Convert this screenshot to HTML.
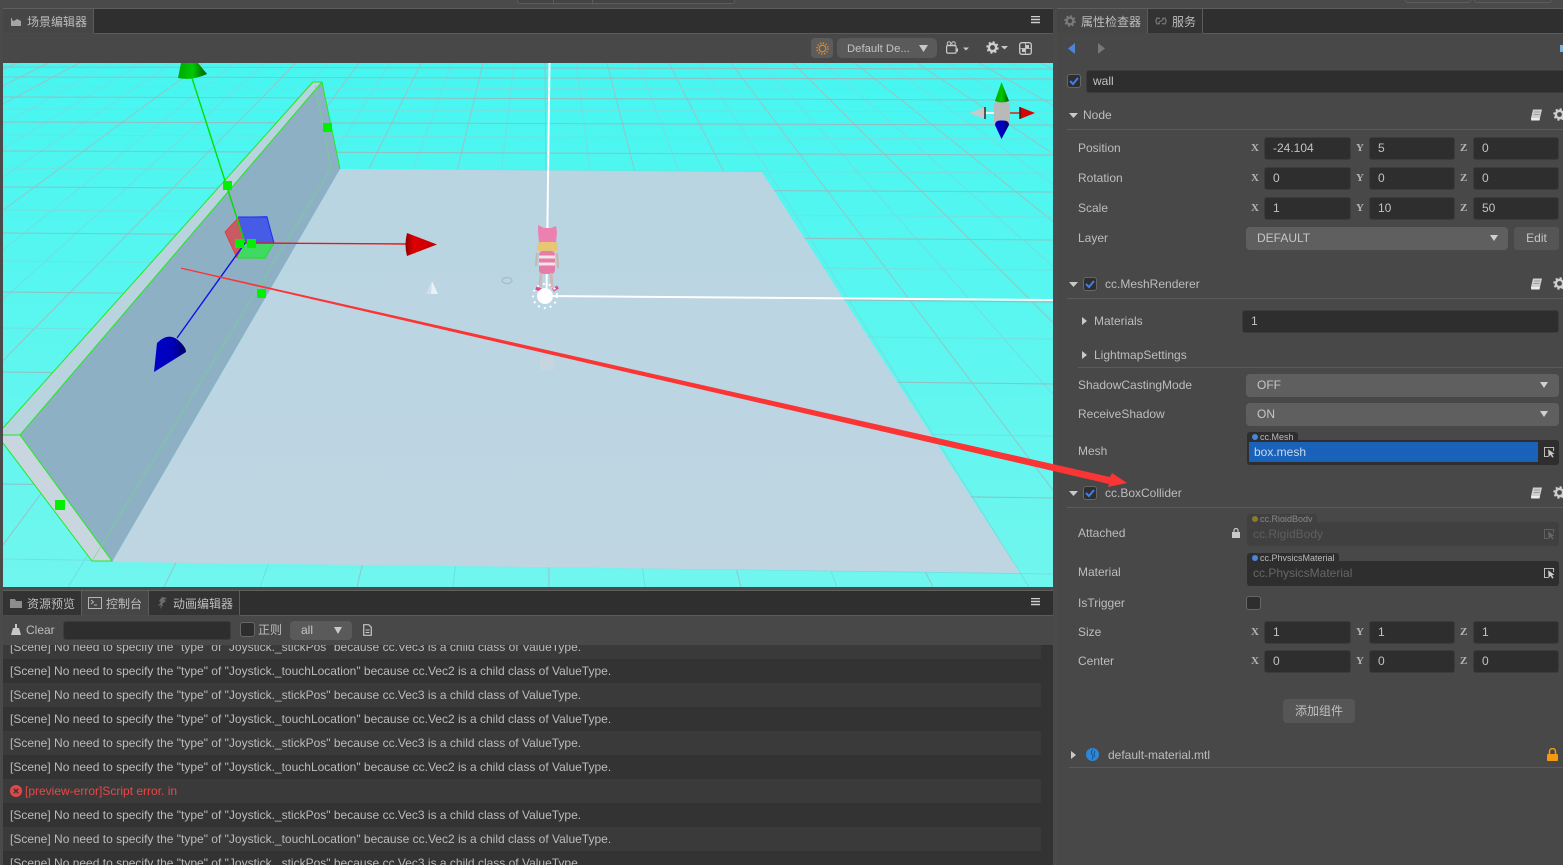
<!DOCTYPE html>
<html lang="zh"><head><meta charset="utf-8"><title>场景编辑器</title>
<style>
html,body{margin:0;padding:0;width:1563px;height:865px;overflow:hidden;background:#4a4a4a}
body{position:relative;font:12px "Liberation Sans","Noto Sans CJK SC",sans-serif;color:#bdbdbd}
div,span,svg{position:absolute}
.t{white-space:nowrap;line-height:16px}
.bar{background:#2f2f2f}
.tab{background:#464646;height:24px;box-sizing:border-box;border-right:1px solid #5c5c5c}
.tabd{background:#333;height:24px;box-sizing:border-box;border-right:1px solid #5c5c5c}
.inp{background:#2e2e2e;border:1px solid #3c3c3c;box-sizing:border-box;border-radius:3px;height:23px;line-height:21px;padding-left:8px;color:#c2c2c2;white-space:nowrap}
.sel{background:#5f5f5f;box-sizing:border-box;border-radius:4px;height:23px;line-height:23px;padding-left:11px;color:#c6c6c6}
.xyz{font:11px/12px "Liberation Serif",serif;color:#b4b4b4;font-weight:bold}
.ln{height:1px;background:#5b5b5b}
.row{left:3px;width:1038px;height:24px;line-height:24px;padding-left:7px;box-sizing:border-box;white-space:nowrap;color:#bbb}
.a{background:#3a3a3a}.b{background:#333}
.cb{box-sizing:border-box;width:14px;height:14px;border:1px solid #666;border-radius:3px;background:#2e2e2e}
.tag{background:#2e2e2e;border-radius:3px 3px 0 0;height:10px;font-size:9px;line-height:10px;padding-left:13px;box-sizing:border-box;color:#bbb;white-space:nowrap;overflow:hidden}
.dot{width:6px;height:6px;border-radius:3px;background:#4a86d8;left:5px;top:2px}
</style></head><body>

<svg width="0" height="0" style="left:0;top:0"><defs>
<symbol id="gear" viewBox="0 0 14 14"><circle cx="7" cy="7" r="3.900" fill="none" stroke="currentColor" stroke-width="2.600"/><circle cx="7" cy="7" r="5.800" fill="none" stroke="currentColor" stroke-width="1.800" stroke-dasharray="2.300 2.250"/></symbol>
<symbol id="book" viewBox="0 0 12 12"><path d="M3 .5h9L10 9H1z" fill="#cfcfcf"/><path d="M1 9h9l-.5 2.500H1.200z" fill="#ececec"/><path d="M4 3h6M3.600 5.500h6" stroke="#8a8a8a" stroke-width=".8"/></symbol>
<symbol id="pick" viewBox="0 0 12 12"><path d="M10.500 5V1H.5v10H5" fill="none" stroke="currentColor"/><path d="M4.500 3l7 5-2.700.3L10.500 11.500 8.800 12 7.300 9.200l-2.300 2z" fill="currentColor"/></symbol>
<symbol id="chk" viewBox="0 0 14 14"><path d="M3 7l3 3 5-6" fill="none" stroke="#3f7fe8" stroke-width="2"/></symbol>
<symbol id="menu" viewBox="0 0 9 8"><path d="M0 .5h9M0 3.500h9M0 6.500h9" stroke="#cfcfcf" stroke-width="1.400"/></symbol>
</defs></svg>

<!-- top cut-off buttons -->
<div style="left:517px;top:0;width:216px;height:3px;border:1px solid #5c5c5c;border-top:0;border-radius:0 0 3px 3px;background:#444"></div>
<div style="left:553px;top:0;width:1px;height:3px;background:#5c5c5c"></div>
<div style="left:592px;top:0;width:1px;height:3px;background:#5c5c5c"></div>
<div style="left:1405px;top:0;width:64px;height:2px;border:1px solid #5c5c5c;border-top:0;border-radius:0 0 3px 3px"></div>
<div style="left:1474px;top:0;width:76px;height:2px;border:1px solid #5c5c5c;border-top:0;border-radius:0 0 3px 3px"></div>

<!-- scene panel -->
<div class="ln" style="left:3px;top:8px;width:1050px;background:#5e5e5e"></div>
<div class="bar" style="left:3px;top:9px;width:1050px;height:24px"></div>
<div class="tab" style="left:3px;top:9px;width:91px"></div>
<svg style="left:10px;top:15px" width="12" height="12" viewBox="0 0 12 12"><path d="M1 11V3h1v2l2 1 3-2 4 2v5z" fill="#a5a5a5"/></svg>
<div class="t" style="left:27px;top:14px">场景编辑器</div>
<svg style="left:1031px;top:16px" width="9" height="8"><use href="#menu"/></svg>
<div class="ln" style="left:94px;top:33px;width:959px"></div>
<div style="left:3px;top:34px;width:1050px;height:29px;background:#484848"></div>
<div style="left:811px;top:38px;width:22px;height:20px;background:#5c5c5c;border-radius:4px"></div>
<svg style="left:816px;top:42px" width="13" height="13" viewBox="0 0 13 13"><circle cx="6.500" cy="6.500" r="3.300" fill="none" stroke="#e88a2e" stroke-width="1.100"/><circle cx="6.500" cy="6.500" r="5.500" fill="none" stroke="#e88a2e" stroke-width="1.500" stroke-dasharray="1.300 1.600"/></svg>
<div style="left:837px;top:38px;width:100px;height:20px;background:#5a5a5a;border-radius:5px"></div>
<div class="t" style="left:847px;top:41px;color:#c4c4c4;font-size:11.300px">Default De...</div>
<svg style="left:919px;top:45px" width="9" height="7"><path d="M0 0h9L4.500 7z" fill="#c8c8c8"/></svg>
<svg style="left:946px;top:41px" width="24" height="14" viewBox="0 0 24 14"><rect x=".6" y="4.600" width="9.500" height="7.500" rx="1" fill="none" stroke="#c9c9c9" stroke-width="1.200"/><circle cx="3" cy="2.500" r="1.800" fill="none" stroke="#c9c9c9"/><circle cx="7.500" cy="2.500" r="1.800" fill="none" stroke="#c9c9c9"/><path d="M10.500 8l1.500-1v4l-1.500-1z" fill="#c9c9c9"/><path d="M17 6.500h6l-3 3z" fill="#c9c9c9"/></svg>
<svg style="left:986px;top:41px;color:#cfcfcf" width="13" height="13"><use href="#gear"/></svg>
<svg style="left:1001px;top:46px" width="7" height="4"><path d="M0 0h7L3.500 3.500z" fill="#c9c9c9"/></svg>
<svg style="left:1019px;top:42px" width="13" height="13" viewBox="0 0 13 13"><rect x=".7" y=".7" width="11.600" height="11.600" rx="2" fill="none" stroke="#c9c9c9" stroke-width="1.300"/><path d="M6.500 1v11M1 6.500h11" stroke="#c9c9c9" stroke-width=".8"/><rect x="6.500" y="3" width="3.500" height="3.500" fill="#c9c9c9"/><rect x="3" y="6.500" width="3.500" height="3.500" fill="#c9c9c9"/></svg>

<!-- viewport -->
<svg style="left:3px;top:63px" width="1050" height="524" viewBox="3 63 1050 524">
<defs>
<linearGradient id="bg" x1="0" y1="0" x2="0" y2="1"><stop offset="0" stop-color="#46f6f1"/><stop offset="1" stop-color="#70f6ee"/></linearGradient>
<linearGradient id="pl" x1="0" y1="0" x2="0" y2="1"><stop offset="0" stop-color="#b9d5e2"/><stop offset="1" stop-color="#bfd5e2"/></linearGradient>
<linearGradient id="rc" x1="0" y1="0" x2="1" y2="0"><stop offset="0" stop-color="#8c0000"/><stop offset=".25" stop-color="#dd0000"/><stop offset="1" stop-color="#c00000"/></linearGradient>
<linearGradient id="gc" x1="0" y1="0" x2="1" y2="0"><stop offset="0" stop-color="#00a800"/><stop offset=".5" stop-color="#00c800"/><stop offset="1" stop-color="#005c00"/></linearGradient>
<linearGradient id="bc" x1="0" y1="0" x2="1" y2="0"><stop offset="0" stop-color="#0000c8"/><stop offset=".6" stop-color="#0000b8"/><stop offset="1" stop-color="#000060"/></linearGradient>
</defs>
<rect x="3" y="63" width="1050" height="524" fill="url(#bg)"/>
<path fill="none" stroke="#6fdfdf" stroke-width="1" d="M110 63L-797 587M141 63L-701 587M172 63L-605 587M234 63L-413 587M265 63L-316 587M328 63L-124 587M390 63L68 587M452 63L260 587M514 63L453 587M576 63L645 587M638 63L837 587M700 63L1029 587M762 63L1222 587M824 63L1414 587M886 63L1607 587M948 63L1799 587M1010 63L1991 587"/>
<path fill="none" stroke="#94c4c6" stroke-width="1" d="M17 63L-1085 587M48 63L-989 587M79 63L-893 587M203 63L-509 587M296 63L-220 587M359 63L-28 587M421 63L164 587M483 63L357 587M545 63L549 587M607 63L741 587M669 63L933 587M731 63L1126 587M793 63L1318 587M855 63L1510 587M917 63L1703 587M979 63L1895 587M1041 63L2087 587"/>
<path fill="none" stroke="#72e0df" stroke-width="1" d="M3 87L1053 90M3 109L1053 112M3 135L1053 139M3 168L1053 173M3 210L1053 217M3 261L1053 270M3 328L1053 339M3 423L1053 436M3 559L1053 574"/>
<path fill="none" stroke="#90c0c3" stroke-width="1.100" d="M3 67L1053 69M3 77L1053 79M3 97L1053 100M3 122L1053 125M3 151L1053 155M3 187L1053 192M3 233L1053 240M3 292L1053 302M3 372L1053 384M3 484L1053 498"/>
<!-- plane -->
<polygon points="340,169 762,172 1020,573 112,562" fill="url(#pl)"/>
<!-- wall -->
<polygon points="313,82 322,82 20,435 3,435 3,428" fill="#b9d3df"/>
<polygon points="322,82 340,169 112,562 20,435" fill="#8db0c5"/>
<polygon points="3,436 20,435 112,561 92,561 3,442" fill="#c9d6df"/>
<path d="M313 82L3 428M322 82L20 435L112 561H92L3 443M3 435H20M313 82H322L340 169" fill="none" stroke="#22e822" stroke-width="1"/>
<path d="M315 85L331 168L92 561" fill="none" stroke="#6fdc7f" stroke-width=".6"/>
<!-- white axis lines -->
<path d="M549.500 63L546.500 295" stroke="#fff" stroke-width="2"/>
<path d="M546 296L1053 300" stroke="#fff" stroke-width="2"/>
<!-- small items -->
<rect x="540" y="356" width="14" height="14" fill="#c6d6de"/>
<path d="M432 281L438 294H426z" fill="#eaf1f5"/><path d="M432 281L426 294H431z" fill="#cfdfe8"/>
<ellipse cx="507" cy="280.500" rx="5" ry="3" fill="none" stroke="#a4bcc8" stroke-width="1.200"/>
<!-- character -->
<path d="M538 225l6 3h7l5-2 1 6-1 11h-17l-1-12z" fill="#ec80ae"/>
<rect x="537" y="242" width="21" height="10" rx="4" fill="#e7c774"/>
<path d="M537 253l-1 13M557 253l1 15" stroke="#cdb5ae" stroke-width="2.200"/>
<rect x="539" y="251" width="16" height="23" rx="4" fill="#e67ca8"/>
<path d="M539 257h16M539 264h16" stroke="#f5e3ea" stroke-width="3"/>
<path d="M541 273l-1 14M551 273l1 14" stroke="#cdb8b4" stroke-width="3"/>
<path d="M536 288l5 2M553 290l5-3" stroke="#d94f85" stroke-width="3.500"/>
<circle cx="545" cy="296" r="8" fill="#fff"/>
<circle cx="545" cy="296" r="12" fill="none" stroke="#fff" stroke-width="2" stroke-dasharray="2 4"/>
<!-- transform gizmo -->
<polygon points="238,218 225,232 237,258 245,243" fill="#c85a63"/>
<polygon points="238,217 267,216 274,243 245,243" fill="#465be6"/>
<polygon points="237,258 245,243 274,243 265,259" fill="#40da62"/>
<path d="M225 232L238 218L245 243M225 232L237 258" fill="none" stroke="#f03030" stroke-width=".8"/>
<path d="M238 217H267L274 243" fill="none" stroke="#1530f0" stroke-width="1"/>
<path d="M237 258H265L274 243" fill="none" stroke="#20e020" stroke-width="1"/>
<path d="M191 75L245 243" stroke="#00e000" stroke-width="1.400"/>
<path d="M245 243L407 244" stroke="#e81818" stroke-width="1.400"/>
<path d="M245 243L177 338" stroke="#1010e8" stroke-width="1.400"/>
<path d="M181 63H198L207 74Q192 81 178 78z" fill="url(#gc)"/>
<path d="M407 233L437 244.500L407 256Q404 245 407 233z" fill="url(#rc)"/>
<path d="M154 372L157 343Q168 332 178 340Q186 347 186 352z" fill="url(#bc)"/>
<g fill="#00f000"><rect x="223" y="181" width="9" height="9"/><rect x="323" y="123" width="9" height="9"/><rect x="235" y="239" width="9" height="9"/><rect x="247" y="239" width="9" height="9"/><rect x="257" y="289" width="9" height="9"/><rect x="55" y="500" width="10" height="10"/></g>
<!-- view gizmo -->
<rect x="994" y="102" width="16" height="23" rx="3" fill="#b9b9b9"/>
<path d="M1010 113h10" stroke="#c05050" stroke-width="2"/><path d="M985 113h9" stroke="#f0f0f0" stroke-width="2"/>
<path d="M1001.500 82L1009 101Q1001.500 104 995 101z" fill="url(#gc)"/>
<path d="M1001.500 139L1009 125Q1009 120 1001.500 120.500Q995 120 995 125z" fill="url(#bc)"/>
<path d="M1020 107L1035 113L1020 119z" fill="#d80000"/><path d="M1020 107v12" stroke="#222" stroke-width="1.400"/>
<path d="M985 107L969 113L985 119z" fill="#c9c9c9"/><path d="M985 107v12" stroke="#222" stroke-width="1.400"/>
</svg>

<!-- console panel -->
<div class="ln" style="left:3px;top:590px;width:1050px;background:#5e5e5e"></div>
<div class="bar" style="left:3px;top:591px;width:1050px;height:24px"></div>
<div class="tabd" style="left:3px;top:591px;width:79px"></div>
<div class="tab" style="left:82px;top:591px;width:67px"></div>
<div class="tabd" style="left:149px;top:591px;width:91px"></div>
<svg style="left:10px;top:597px" width="12" height="12" viewBox="0 0 12 12"><path d="M0 2h5l1 2h6v7H0z" fill="#8d8d8d"/></svg>
<div class="t" style="left:27px;top:596px">资源预览</div>
<svg style="left:88px;top:597px" width="14" height="12" viewBox="0 0 14 12"><rect x=".5" y=".5" width="13" height="11" fill="none" stroke="#b5b5b5"/><path d="M3 3l2.500 2L3 7M6 8h3" fill="none" stroke="#b5b5b5"/></svg>
<div class="t" style="left:106px;top:596px">控制台</div>
<svg style="left:156px;top:597px" width="12" height="12" viewBox="0 0 12 12"><path d="M6 0l5 1-3 2 2 1-4 3 1 1-3 4 1-4-3 1 3-4-2-1z" fill="#6c6c6c"/></svg>
<div class="t" style="left:173px;top:596px">动画编辑器</div>
<svg style="left:1031px;top:598px" width="9" height="8"><use href="#menu"/></svg>
<div class="ln" style="left:240px;top:615px;width:813px"></div>
<div style="left:3px;top:616px;width:1050px;height:29px;background:#484848"></div>
<svg style="left:11px;top:624px" width="10" height="11" viewBox="0 0 10 11"><path d="M4 0h2v4h2l2 7H0l2-7h2z" fill="#c6c6c6"/></svg>
<div class="t" style="left:26px;top:622px">Clear</div>
<div class="inp" style="left:63px;top:621px;width:168px;height:19px"></div>
<div class="cb" style="left:240px;top:622px;width:15px;height:15px"></div>
<div class="t" style="left:258px;top:622px">正则</div>
<div class="sel" style="left:290px;top:621px;width:62px;height:19px;line-height:19px;background:#5a5a5a">all</div>
<svg style="left:334px;top:627px" width="8" height="7"><path d="M0 0h8L4 7z" fill="#c9c9c9"/></svg>
<svg style="left:363px;top:624px" width="9" height="12" viewBox="0 0 9 12"><path d="M.7.700h5l2.600 2.600v8H.7z" fill="none" stroke="#c6c6c6" stroke-width="1.200"/><path d="M2.500 6h4M2.500 8.500h4" stroke="#c6c6c6"/></svg>

<div style="left:3px;top:645px;width:1050px;height:220px;background:#333;overflow:hidden">
<div class="row a" style="left:0;top:-10px">[Scene] No need to specify the "type" of "Joystick._stickPos" because cc.Vec3 is a child class of ValueType.</div>
<div class="row b" style="left:0;top:14px">[Scene] No need to specify the "type" of "Joystick._touchLocation" because cc.Vec2 is a child class of ValueType.</div>
<div class="row a" style="left:0;top:38px">[Scene] No need to specify the "type" of "Joystick._stickPos" because cc.Vec3 is a child class of ValueType.</div>
<div class="row b" style="left:0;top:62px">[Scene] No need to specify the "type" of "Joystick._touchLocation" because cc.Vec2 is a child class of ValueType.</div>
<div class="row a" style="left:0;top:86px">[Scene] No need to specify the "type" of "Joystick._stickPos" because cc.Vec3 is a child class of ValueType.</div>
<div class="row b" style="left:0;top:110px">[Scene] No need to specify the "type" of "Joystick._touchLocation" because cc.Vec2 is a child class of ValueType.</div>
<div class="row a" style="left:0;top:134px;color:#e84848;padding-left:22px">[preview-error]Script error. in</div>
<div class="row b" style="left:0;top:158px">[Scene] No need to specify the "type" of "Joystick._stickPos" because cc.Vec3 is a child class of ValueType.</div>
<div class="row a" style="left:0;top:182px">[Scene] No need to specify the "type" of "Joystick._touchLocation" because cc.Vec2 is a child class of ValueType.</div>
<div class="row b" style="left:0;top:206px">[Scene] No need to specify the "type" of "Joystick._stickPos" because cc.Vec3 is a child class of ValueType.</div>
</div>
<svg style="left:10px;top:785px" width="12" height="12" viewBox="0 0 12 12"><circle cx="6" cy="6" r="6" fill="#e04848"/><path d="M3.800 3.800l4.400 4.400M8.200 3.800L3.800 8.200" stroke="#3a3a3a" stroke-width="1.500"/></svg>

<!-- inspector -->
<div style="left:1057px;top:8px;width:506px;height:857px;background:#484848"></div>
<div class="ln" style="left:1057px;top:8px;width:506px;background:#5e5e5e"></div>
<div class="bar" style="left:1057px;top:9px;width:506px;height:24px"></div>
<div class="tab" style="left:1057px;top:9px;width:91px"></div>
<div class="tabd" style="left:1148px;top:9px;width:55px"></div>
<svg style="left:1064px;top:15px;color:#7a7a7a" width="12" height="12" viewBox="0 0 14 14"><use href="#gear"/></svg>
<div class="t" style="left:1081px;top:14px">属性检查器</div>
<svg style="left:1155px;top:17px" width="12" height="8" viewBox="0 0 12 8"><path d="M5 1.500L2 1 .8 4 2 7l3-.5M7 1.500L10 1l1.200 3L10 7l-3-.5M3.500 5.500L8.500 2.500" fill="none" stroke="#777" stroke-width="1.200"/></svg>
<div class="t" style="left:1172px;top:14px">服务</div>
<div class="ln" style="left:1203px;top:33px;width:360px"></div>
<svg style="left:1068px;top:43px" width="7" height="11"><path d="M7 0v11L0 5.500z" fill="#4a86d8"/></svg>
<svg style="left:1098px;top:43px" width="7" height="11"><path d="M0 0v11l7-5.500z" fill="#777"/></svg>
<div style="left:1560px;top:45px;width:3px;height:7px;background:#7fb0d8"></div>

<div class="cb" style="left:1067px;top:74px"></div><svg style="left:1067px;top:74px" width="14" height="14"><use href="#chk"/></svg>
<div class="inp" style="left:1086px;top:70px;width:480px;padding-left:6px">wall</div>

<svg style="left:1069px;top:113px" width="9" height="5"><path d="M0 0h9L4.500 5z" fill="#c9c9c9"/></svg>
<div class="t" style="left:1083px;top:107px">Node</div>
<svg style="left:1530px;top:109px" width="12" height="12"><use href="#book"/></svg>
<svg style="left:1553px;top:108px;color:#cfcfcf" width="13" height="13"><use href="#gear"/></svg>
<div class="ln" style="left:1067px;top:129px;width:496px"></div>

<div class="t" style="left:1078px;top:140px">Position</div>
<div class="t" style="left:1078px;top:170px">Rotation</div>
<div class="t" style="left:1078px;top:200px">Scale</div>
<div class="t" style="left:1078px;top:230px">Layer</div>

<div class="xyz" style="left:1251px;top:142px">X</div><div class="inp" style="left:1264px;top:137px;width:87px">-24.104</div>
<div class="xyz" style="left:1356px;top:142px">Y</div><div class="inp" style="left:1369px;top:137px;width:86px">5</div>
<div class="xyz" style="left:1460px;top:142px">Z</div><div class="inp" style="left:1473px;top:137px;width:86px">0</div>
<div class="xyz" style="left:1251px;top:172px">X</div><div class="inp" style="left:1264px;top:167px;width:87px">0</div>
<div class="xyz" style="left:1356px;top:172px">Y</div><div class="inp" style="left:1369px;top:167px;width:86px">0</div>
<div class="xyz" style="left:1460px;top:172px">Z</div><div class="inp" style="left:1473px;top:167px;width:86px">0</div>
<div class="xyz" style="left:1251px;top:202px">X</div><div class="inp" style="left:1264px;top:197px;width:87px">1</div>
<div class="xyz" style="left:1356px;top:202px">Y</div><div class="inp" style="left:1369px;top:197px;width:86px">10</div>
<div class="xyz" style="left:1460px;top:202px">Z</div><div class="inp" style="left:1473px;top:197px;width:86px">50</div>

<div class="sel" style="left:1246px;top:227px;width:262px">DEFAULT</div>
<svg style="left:1490px;top:235px" width="8" height="6"><path d="M0 0h8L4 6z" fill="#d0d0d0"/></svg>
<div style="left:1514px;top:227px;width:45px;height:23px;background:#555;border-radius:3px;text-align:center;line-height:23px;color:#c6c6c6">Edit</div>

<svg style="left:1069px;top:282px" width="9" height="5"><path d="M0 0h9L4.500 5z" fill="#c9c9c9"/></svg>
<div class="cb" style="left:1083px;top:277px"></div><svg style="left:1083px;top:277px" width="14" height="14"><use href="#chk"/></svg>
<div class="t" style="left:1105px;top:276px">cc.MeshRenderer</div>
<svg style="left:1530px;top:278px" width="12" height="12"><use href="#book"/></svg>
<svg style="left:1553px;top:277px;color:#cfcfcf" width="13" height="13"><use href="#gear"/></svg>
<div class="ln" style="left:1067px;top:298px;width:496px"></div>

<svg style="left:1082px;top:317px" width="5" height="8"><path d="M0 0v8l5-4z" fill="#c9c9c9"/></svg>
<div class="t" style="left:1094px;top:313px">Materials</div>
<div class="inp" style="left:1242px;top:310px;width:317px">1</div>
<svg style="left:1082px;top:351px" width="5" height="8"><path d="M0 0v8l5-4z" fill="#c9c9c9"/></svg>
<div class="t" style="left:1094px;top:347px">LightmapSettings</div>
<div class="ln" style="left:1078px;top:367px;width:485px"></div>

<div class="t" style="left:1078px;top:377px">ShadowCastingMode</div>
<div class="sel" style="left:1246px;top:374px;width:313px">OFF</div>
<svg style="left:1540px;top:382px" width="8" height="6"><path d="M0 0h8L4 6z" fill="#d0d0d0"/></svg>
<div class="t" style="left:1078px;top:406px">ReceiveShadow</div>
<div class="sel" style="left:1246px;top:403px;width:313px">ON</div>
<svg style="left:1540px;top:411px" width="8" height="6"><path d="M0 0h8L4 6z" fill="#d0d0d0"/></svg>

<div class="t" style="left:1078px;top:443px">Mesh</div>
<div class="tag" style="left:1247px;top:432px;width:51px">cc.Mesh<span class="dot"></span></div>
<div style="left:1247px;top:440px;width:312px;height:25px;background:#2e2e2e;border-radius:3px"></div>
<div style="left:1249px;top:442px;width:289px;height:20px;background:#1a61b9;line-height:20px;padding-left:5px;box-sizing:border-box;color:#c9d9ee">box.mesh</div>
<svg style="left:1544px;top:446px;color:#c9c9c9" width="11" height="12"><use href="#pick"/></svg>

<svg style="left:1069px;top:491px" width="9" height="5"><path d="M0 0h9L4.500 5z" fill="#c9c9c9"/></svg>
<div class="cb" style="left:1083px;top:486px"></div><svg style="left:1083px;top:486px" width="14" height="14"><use href="#chk"/></svg>
<div class="t" style="left:1105px;top:485px">cc.BoxCollider</div>
<svg style="left:1530px;top:487px" width="12" height="12"><use href="#book"/></svg>
<svg style="left:1553px;top:486px;color:#cfcfcf" width="13" height="13"><use href="#gear"/></svg>
<div class="ln" style="left:1067px;top:507px;width:496px"></div>

<div class="t" style="left:1078px;top:525px">Attached</div>
<svg style="left:1232px;top:528px" width="8" height="10" viewBox="0 0 8 10"><path d="M2 4V2.500a2 2 0 014 0V4" fill="none" stroke="#c9c9c9" stroke-width="1.200"/><rect y="4" width="8" height="6" fill="#c9c9c9"/></svg>
<div class="tag" style="left:1247px;top:514px;width:70px;background:#404040;color:#888">cc.RigidBody<span class="dot" style="background:#8a7a2a"></span></div>
<div style="left:1247px;top:522px;width:312px;height:24px;background:#404040;border-radius:3px;line-height:24px;padding-left:6px;box-sizing:border-box;color:#5e5e5e">cc.RigidBody</div>
<svg style="left:1544px;top:528px;color:#646464" width="11" height="12"><use href="#pick"/></svg>

<div class="t" style="left:1078px;top:564px">Material</div>
<div class="tag" style="left:1247px;top:553px;width:92px">cc.PhysicsMaterial<span class="dot"></span></div>
<div style="left:1247px;top:561px;width:312px;height:25px;background:#2e2e2e;border-radius:3px;line-height:25px;padding-left:6px;box-sizing:border-box;color:#666">cc.PhysicsMaterial</div>
<svg style="left:1544px;top:567px;color:#c9c9c9" width="11" height="12"><use href="#pick"/></svg>

<div class="t" style="left:1078px;top:595px">IsTrigger</div>
<div class="cb" style="left:1246px;top:596px;width:15px;height:14px"></div>

<div class="t" style="left:1078px;top:624px">Size</div>
<div class="xyz" style="left:1251px;top:626px">X</div><div class="inp" style="left:1264px;top:621px;width:87px">1</div>
<div class="xyz" style="left:1356px;top:626px">Y</div><div class="inp" style="left:1369px;top:621px;width:86px">1</div>
<div class="xyz" style="left:1460px;top:626px">Z</div><div class="inp" style="left:1473px;top:621px;width:86px">1</div>
<div class="t" style="left:1078px;top:653px">Center</div>
<div class="xyz" style="left:1251px;top:655px">X</div><div class="inp" style="left:1264px;top:650px;width:87px">0</div>
<div class="xyz" style="left:1356px;top:655px">Y</div><div class="inp" style="left:1369px;top:650px;width:86px">0</div>
<div class="xyz" style="left:1460px;top:655px">Z</div><div class="inp" style="left:1473px;top:650px;width:86px">0</div>

<div style="left:1283px;top:699px;width:72px;height:24px;background:#565656;border-radius:4px;text-align:center;line-height:24px;color:#c0c0c0">添加组件</div>

<svg style="left:1071px;top:751px" width="5" height="8"><path d="M0 0v8l5-4z" fill="#c9c9c9"/></svg>
<svg style="left:1086px;top:748px" width="13" height="13" viewBox="0 0 13 13"><circle cx="6.500" cy="6.500" r="6.500" fill="#2e86d8"/><path d="M7 1.500Q4 4 6 6.500T6 11.500M9 3Q7 6 9 9" fill="none" stroke="#1a4f85" stroke-width=".9"/></svg>
<div class="t" style="left:1108px;top:747px">default-material.mtl</div>
<svg style="left:1547px;top:748px" width="11" height="13" viewBox="0 0 11 13"><path d="M2.500 6V3.500a3 3 0 016 0V6" fill="none" stroke="#f39a10" stroke-width="1.500"/><rect y="6" width="11" height="7" rx="1" fill="#f39a10"/></svg>
<div class="ln" style="left:1069px;top:767px;width:494px"></div>

<!-- red annotation arrow -->
<svg style="left:0;top:0" width="1563" height="865"><polygon points="181,267.500 1110,477 1112,473 1127,483 1108,487 1109,484 181,268.800" fill="#fb3434"/></svg>

</body></html>
